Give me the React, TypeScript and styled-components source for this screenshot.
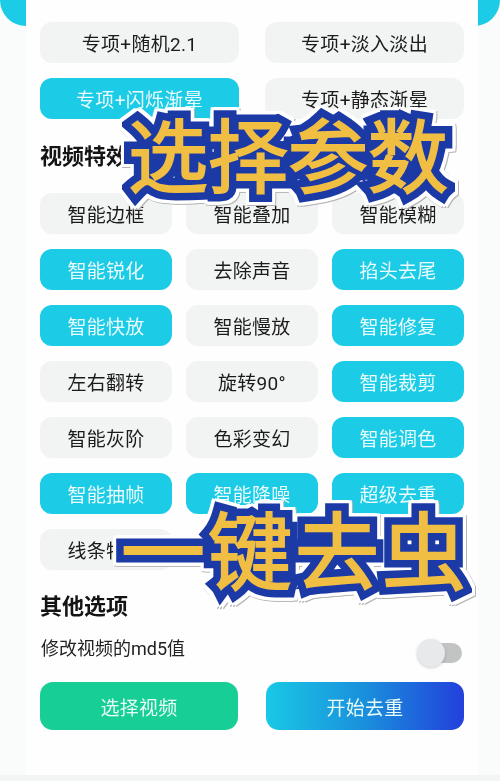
import React from "react";
import styled, { createGlobalStyle } from "styled-components";

const GlobalStyle = createGlobalStyle`
  html, body {
    margin: 0;
    padding: 0;
    background: #fafcfc;
  }
  body {
    width: 500px;
    height: 781px;
    overflow: hidden;
    font-family: "Roboto", "Noto Sans CJK SC", sans-serif;
  }
`;

const Page = styled.div`
  position: relative;
  width: 500px;
  height: 781px;
  overflow: hidden;
  background: #fafcfc;
`;

const Screen = styled.div`
  filter: blur(0.45px);
`;

const HeaderBand = styled.div`
  height: 26px;
  background: #1ccbe6;
  border-radius: 0 0 26px 26px;
`;

const Card = styled.div`
  margin: -26px 22px 0 26px;
  height: 775px;
  box-sizing: border-box;
  padding: 22px 14px 0 14px;
  background: #fefefe;
`;

const FooterStrip = styled.div`
  height: 6px;
  background: #f3f5f5;
`;

const TwoCols = styled.div`
  display: grid;
  grid-template-columns: 199px 199px;
  justify-content: space-between;
  row-gap: 15px;
`;

const ThreeCols = styled.div`
  display: grid;
  grid-template-columns: repeat(3, 132px);
  justify-content: space-between;
  row-gap: 15px;
`;

const Chip = styled.div<{ $active?: boolean }>`
  height: 41px;
  display: flex;
  align-items: center;
  justify-content: center;
  border-radius: 12px;
  font-size: 19px;
  letter-spacing: 0.3px;
  background: ${(p) => (p.$active ? "#1ccbe6" : "#f2f3f3")};
  color: ${(p) => (p.$active ? "#e9fbfd" : "#1b1b1b")};
`;

const Heading = styled.div`
  font-size: 22px;
  font-weight: 700;
  color: #141414;
  line-height: 28px;
`;

const EffectsHeading = styled(Heading)`
  margin: 24px 0 22px;
`;

const OtherHeading = styled(Heading)`
  margin-top: 23px;
`;

const OptionRow = styled.div`
  display: flex;
  align-items: center;
  justify-content: space-between;
  height: 30px;
  margin-top: 14px;
  padding: 0 2px 0 1px;
`;

const OptionLabel = styled.span`
  font-size: 18px;
  color: #222222;
  margin-top: -6px;
`;

const Toggle = styled.div`
  position: relative;
  width: 37px;
  height: 20px;
  border-radius: 10px;
  background: #c2c4c4;
  margin-top: 6px;
`;

const ToggleKnob = styled.div`
  position: absolute;
  left: -8px;
  top: -4px;
  width: 28px;
  height: 28px;
  border-radius: 50%;
  background: #e8e9eb;
  box-shadow: 0 1px 3px rgba(0, 0, 0, 0.18);
`;

const ActionRow = styled.div`
  display: grid;
  grid-template-columns: 198px 198px;
  justify-content: space-between;
  margin-top: 17px;
`;

const ActionButton = styled.div<{ $variant: "green" | "blue" }>`
  height: 48px;
  display: flex;
  align-items: center;
  justify-content: center;
  border-radius: 13px;
  font-size: 19px;
  letter-spacing: 0.3px;
  color: #e8fbf6;
  background: ${(p) =>
    p.$variant === "green"
      ? "#17cf96"
      : "linear-gradient(90deg, #19c8e6 0%, #1a8fdc 50%, #2240dc 100%)"};
`;

// the yellow fill is a second copy of the text, on top of the thick blue outline
const Sticker = styled.div<{ $left: number; $top: number; $size: number; $spacing: number }>`
  position: absolute;
  left: ${(p) => p.$left}px;
  top: ${(p) => p.$top}px;
  font-family: "Noto Sans CJK SC", sans-serif;
  font-weight: 400;
  font-size: ${(p) => p.$size}px;
  letter-spacing: ${(p) => p.$spacing}px;
  line-height: 1;
  white-space: nowrap;
  color: #1c3aa5;
  -webkit-text-stroke: 17px #1c3aa5;
  filter: drop-shadow(3px 0 0 #fff) drop-shadow(-3px 0 0 #fff) drop-shadow(0 3px 0 #fff)
    drop-shadow(0 -3px 0 #fff) drop-shadow(1px 1px 0 #b5b5b5);

  &::after {
    content: attr(data-text);
    position: absolute;
    left: 0;
    top: 0;
    color: #f0be42;
    -webkit-text-stroke: 2px #f0be42;
  }
`;

const row1 = [
  { label: "专项+随机2.1" },
  { label: "专项+淡入淡出" },
  { label: "专项+闪烁渐晕", active: true },
  { label: "专项+静态渐晕" },
];

const effects = [
  { label: "智能边框" },
  { label: "智能叠加" },
  { label: "智能模糊" },
  { label: "智能锐化", active: true },
  { label: "去除声音" },
  { label: "掐头去尾", active: true },
  { label: "智能快放", active: true },
  { label: "智能慢放" },
  { label: "智能修复", active: true },
  { label: "左右翻转" },
  { label: "旋转90°" },
  { label: "智能裁剪", active: true },
  { label: "智能灰阶" },
  { label: "色彩变幻" },
  { label: "智能调色", active: true },
  { label: "智能抽帧", active: true },
  { label: "智能降噪", active: true },
  { label: "超级去重", active: true },
  { label: "线条特效" },
];

const App: React.FC = () => {
  return (
    <Page>
      <GlobalStyle />
      <Screen>
        <HeaderBand />
        <Card>
          <TwoCols>
            {row1.map((c) => (
              <Chip key={c.label} $active={c.active}>{c.label}</Chip>
            ))}
          </TwoCols>
          <EffectsHeading>视频特效</EffectsHeading>
          <ThreeCols>
            {effects.map((c) => (
              <Chip key={c.label} $active={c.active}>{c.label}</Chip>
            ))}
          </ThreeCols>
          <OtherHeading>其他选项</OtherHeading>
          <OptionRow>
            <OptionLabel>修改视频的md5值</OptionLabel>
            <Toggle>
              <ToggleKnob />
            </Toggle>
          </OptionRow>
          <ActionRow>
            <ActionButton $variant="green">选择视频</ActionButton>
            <ActionButton $variant="blue">开始去重</ActionButton>
          </ActionRow>
        </Card>
        <FooterStrip />
      </Screen>
      <Sticker $left={128} $top={111} $size={80} $spacing={0} data-text="选择参数">选择参数</Sticker>
      <Sticker $left={121} $top={505} $size={84} $spacing={3} data-text="一键去虫">一键去虫</Sticker>
    </Page>
  );
};

export default App;
